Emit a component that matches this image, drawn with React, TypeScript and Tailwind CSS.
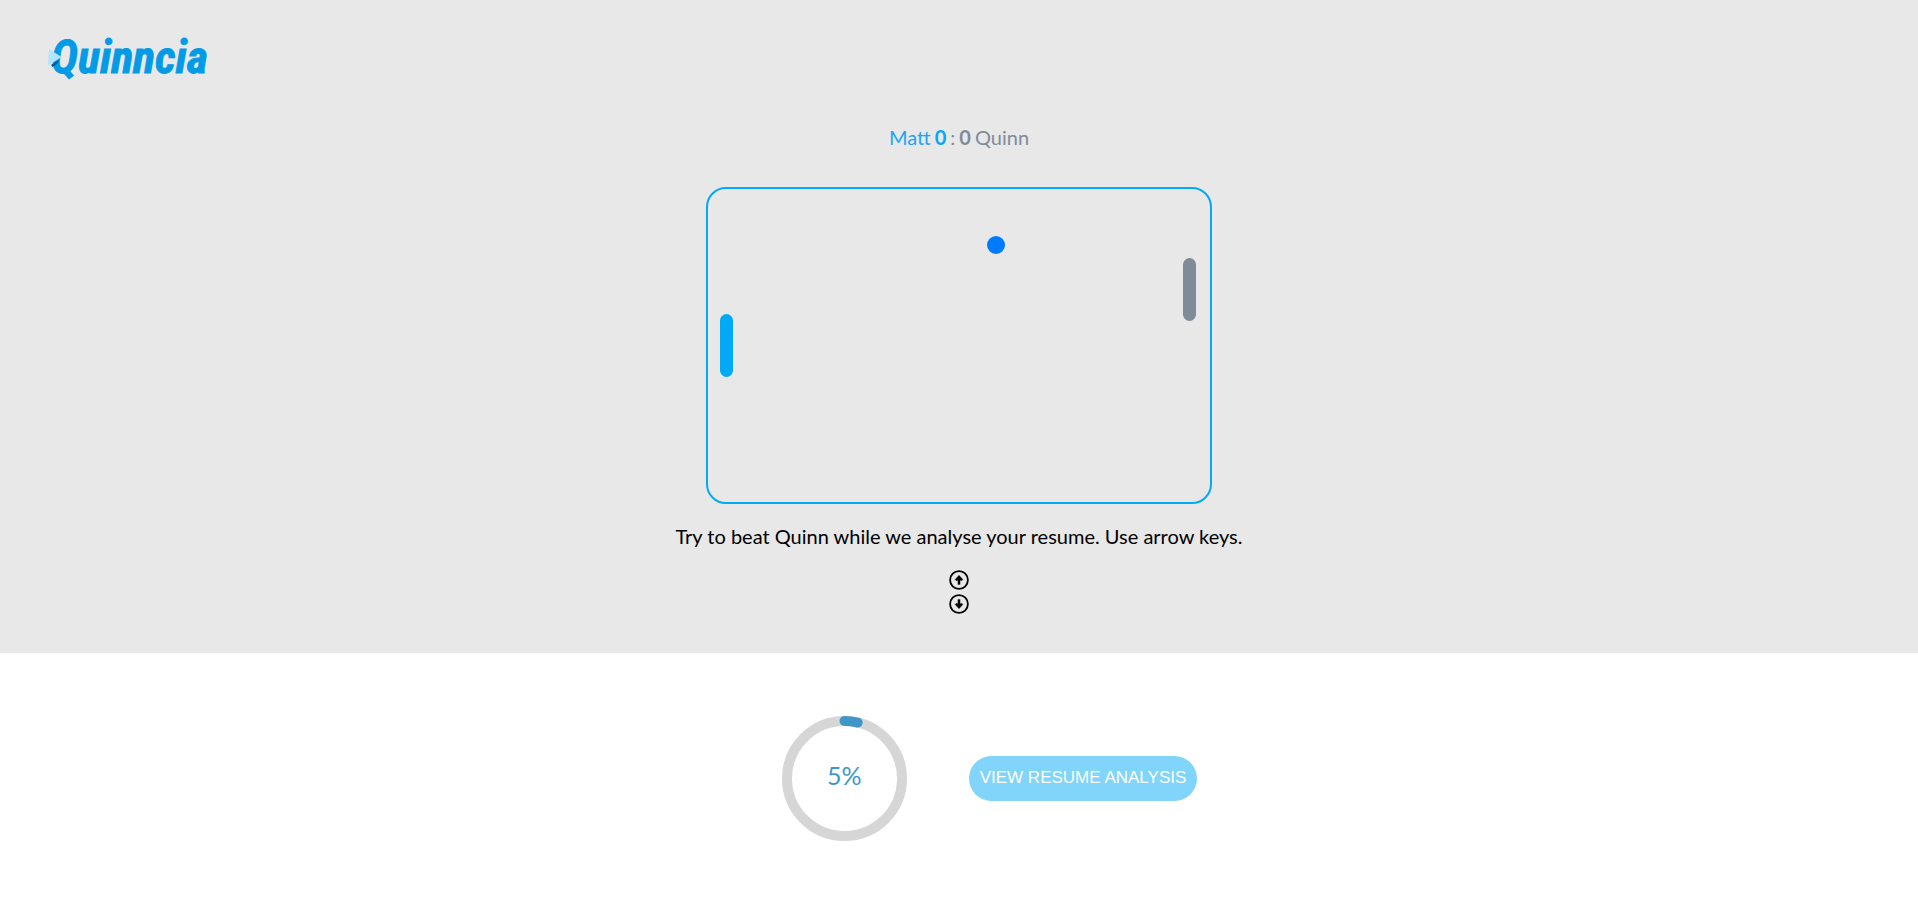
const PROGRESS = 5;
const RING_RADIUS = 57.5;
const RING_LENGTH = 2 * Math.PI * RING_RADIUS;
const ARC_SHARE = 0.037;

function Logo() {
  return (
    <a href="#" aria-label="Quinncia" className="block w-40">
      <svg viewBox="0 0 160 46" className="block h-[46px] w-40 overflow-visible" role="img" aria-hidden="true">
        <text
          x="3"
          y="37"
          fill="#039be5"
          stroke="#039be5"
          strokeWidth="0.8"
          fontSize="46"
          fontWeight="700"
          fontStyle="italic"
          className="font-['Roboto_Condensed','Roboto',sans-serif]"
        >
          Quinncia
        </text>
        <path d="M1 13 13.5 21 0 29.5Z" fill="#b3e5fc" />
        <path d="M3 29 11 24 10 27 4.5 31Z" fill="#01579b" />
      </svg>
    </a>
  );
}

function ArrowCircle({ down = false }: { down?: boolean }) {
  return (
    <svg viewBox="0 0 20 20" className="size-5" aria-hidden="true">
      <circle cx="10" cy="10" r="8.9" fill="none" stroke="#000" strokeWidth="1.8" />
      <path
        d={down ? "M8.9 5.4h2.2v4.4l1.6-.6 1.2 1.4L10 14.8l-3.9-4.2 1.2-1.4 1.6.6Z" : "M8.9 14.6h2.2v-4.4l1.6.6 1.2-1.4L10 5.2 6.1 9.4l1.2 1.4 1.6-.6Z"}
        fill="#000"
        stroke="#000"
        strokeWidth="0.3"
      />
    </svg>
  );
}

export default function App() {
  return (
    <div className="flex min-h-screen flex-col bg-white font-['Lato',sans-serif]">
      <main className="flex flex-col items-center bg-[#e8e8e8] pb-[39px]">
        <header className="w-full px-12 pt-9">
          <Logo />
        </header>

        <p className="mt-10 flex gap-1 text-xl leading-[30px] text-[#808b9a]">
          <span className="text-[#1ca4f4]">Matt</span>
          <b className="text-[#03a9f4]">0</b>
          <span>:</span>
          <b>0</b>
          <span>Quinn</span>
        </p>

        <div className="relative mt-[35px] h-[317px] w-[506px] rounded-[20px] border-2 border-[#03a9f4]">
          <div className="absolute top-[125px] left-3 h-[63px] w-[13px] rounded-full bg-[#03a9f4]" />
          <div className="absolute top-[47px] left-[279px] size-[18px] rounded-full bg-[#007bff]" />
          <div className="absolute top-[69px] right-[14px] h-[63px] w-[13px] rounded-full bg-[#808b9a]" />
        </div>

        <p className="mt-[17px] text-xl leading-[30px] text-black">
          Try to beat Quinn while we analyse your resume. Use arrow keys.
        </p>

        <div className="mt-[19px] flex flex-col gap-1">
          <ArrowCircle />
          <ArrowCircle down />
        </div>
      </main>

      <section className="flex items-center justify-center gap-[62px] py-[63px] pl-[61px]">
        <div className="grid size-[125px] place-items-center">
          <svg viewBox="0 0 125 125" className="col-start-1 row-start-1 size-full" aria-hidden="true">
            <circle cx="62.5" cy="62.5" r={RING_RADIUS} fill="none" stroke="#d6d6d6" strokeWidth="10" />
            <circle
              cx="62.5"
              cy="62.5"
              r={RING_RADIUS}
              fill="none"
              stroke="#3e98c7"
              strokeWidth="10"
              strokeLinecap="round"
              strokeDasharray={`${RING_LENGTH * ARC_SHARE} ${RING_LENGTH}`}
              transform="rotate(-90 62.5 62.5)"
            />
          </svg>
          <span className="col-start-1 row-start-1 pb-2 text-[25px] leading-8 text-[#3e98c7]">{PROGRESS}%</span>
        </div>
        <button
          type="button"
          className="h-[45px] rounded-full bg-[#81d4fa] px-[11px] pb-0.5 font-['Liberation_Sans',sans-serif] text-[17px] text-white"
        >
          VIEW RESUME ANALYSIS
        </button>
      </section>
    </div>
  );
}
